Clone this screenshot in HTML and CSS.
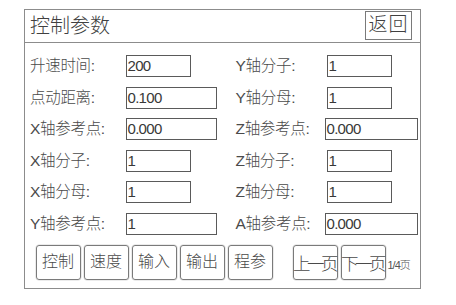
FILE: index.html
```html
<!DOCTYPE html>
<html lang="zh">
<head>
<meta charset="utf-8">
<title>控制参数</title>
<link rel="stylesheet" href="styles.css">
</head>
<body>
<div class="frame">
  <div class="header">
    <span class="title">控制参数</span>
    <span class="back">返回</span>
  </div>
  <div class="form">
    <span class="label">升速时间:</span><span class="field small">200</span>
    <span class="label">Y轴分子:</span><span class="field small r">1</span>

    <span class="label">点动距离:</span><span class="field wide">0.100</span>
    <span class="label">Y轴分母:</span><span class="field small r">1</span>

    <span class="label">X轴参考点:</span><span class="field wide">0.000</span>
    <span class="label">Z轴参考点:</span><span class="field rwide">0.000</span>

    <span class="label">X轴分子:</span><span class="field small">1</span>
    <span class="label">Z轴分子:</span><span class="field small r">1</span>

    <span class="label">X轴分母:</span><span class="field small">1</span>
    <span class="label">Z轴分母:</span><span class="field small r">1</span>

    <span class="label">Y轴参考点:</span><span class="field wide">1</span>
    <span class="label">A轴参考点:</span><span class="field rwide">0.000</span>
  </div>
  <div class="buttons">
    <span class="btn">控制</span>
    <span class="btn">速度</span>
    <span class="btn">输入</span>
    <span class="btn">输出</span>
    <span class="btn">程参</span>
    <span class="btn page first">上一页</span>
    <span class="btn page">下一页</span>
    <span class="count">1/4页</span>
  </div>
</div>
</body>
</html>
```

FILE: styles.css
```css
html, body {
  margin: 0;
  padding: 0;
  background: #ffffff;
}
body {
  font-family: "Liberation Sans", "Noto Sans CJK SC", sans-serif;
  font-weight: 300;
  color: #4a4a4a;
}
.frame {
  margin: 9px 0 0 24px;
  width: 397px;
  height: 280px;
  box-sizing: border-box;
  border: 1.5px solid #8c8c8c;
  display: flex;
  flex-direction: column;
}
.header {
  height: 32.5px;
  box-sizing: border-box;
  border-bottom: 1.5px solid #8c8c8c;
  display: flex;
  align-items: center;
  justify-content: space-between;
  padding: 0 8px 0 5px;
}
.title {
  font-size: 20px;
  line-height: 24px;
  color: #404040;
}
.back {
  width: 47px;
  height: 29px;
  box-sizing: border-box;
  border: 1.5px solid #7a7a7a;
  font-size: 19px;
  line-height: 26px;
  text-align: center;
  letter-spacing: 1px;
  color: #404040;
}
.form {
  display: grid;
  grid-template-columns: 95.5px 110px 90px 1fr;
  grid-auto-rows: 22px;
  row-gap: 9.6px;
  padding: 12.5px 0 0 5px;
  align-items: center;
}
.label {
  font-size: 15.5px;
  line-height: 22px;
  white-space: nowrap;
  letter-spacing: -0.3px;
}
.field {
  height: 22px;
  box-sizing: border-box;
  border: 1.5px solid #5a5a5a;
  font-size: 15px;
  line-height: 19px;
  padding-left: 1px;
  letter-spacing: -0.7px;
  color: #383838;
}
.small { width: 65px; }
.wide { width: 91px; }
.r { margin-left: 1px; }
.rwide { width: 93px; margin-left: -1px; }
.buttons {
  display: flex;
  align-items: center;
  gap: 3px;
  margin-top: 10px;
  padding-left: 10.5px;
}
.btn {
  width: 45px;
  height: 35px;
  box-sizing: border-box;
  border: 1.5px solid #7a7a7a;
  border-radius: 3px;
  font-size: 16px;
  line-height: 32px;
  text-align: center;
  color: #4a4a4a;
  box-shadow: 0 0 0 0.5px #d8d8d8;
}
.page {
  font-size: 17.5px;
  letter-spacing: -3.5px;
  line-height: 37px;
  text-indent: -2px;
}
.first { margin-left: 17px; }
.count {
  align-self: flex-end;
  font-size: 11px;
  letter-spacing: -1px;
  margin: 0 0 8px -1px;
  color: #555555;
}
```
